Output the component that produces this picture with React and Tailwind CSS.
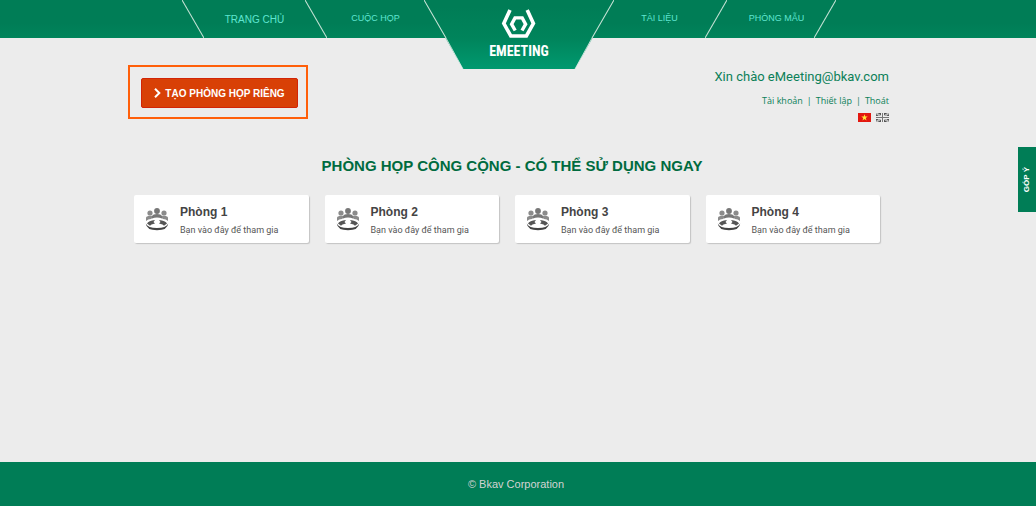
import React from "react";

const rooms = ["Phòng 1", "Phòng 2", "Phòng 3", "Phòng 4"];

function Slash({ mirrored = false }) {
  return (
    <svg viewBox="0 0 22 38" className="h-[38px] w-[22px] shrink-0" aria-hidden="true">
      <path d={mirrored ? "M22 0L0 38" : "M0 0L22 38"} stroke="#c4e2d5" strokeWidth="1.1" fill="none" />
    </svg>
  );
}

function NavLink({ wide = false, children }) {
  return (
    <a
      href="#"
      className={`flex h-[38px] flex-1 items-center justify-center whitespace-nowrap text-[#5fe5d0] ${wide ? "text-[10px]" : "text-[9px]"}`}
    >
      {children}
    </a>
  );
}

function Logo() {
  return (
    <a href="#" aria-label="eMeeting" className="relative -mb-[31px] block h-[69px] w-[190px] shrink-0">
      <svg viewBox="0 0 190 69" className="absolute inset-0 h-full w-full" aria-hidden="true">
        <defs>
          <linearGradient id="badge" x1="0" y1="0" x2="0" y2="1">
            <stop offset="0.1" stopColor="#007d56" />
            <stop offset="0.55" stopColor="#00845b" />
            <stop offset="1" stopColor="#00996f" />
          </linearGradient>
        </defs>
        <path d="M0 0H190L151 69H39Z" fill="url(#badge)" />
        <path d="M0 0L22 38M190 0L168 38" stroke="#c4e2d5" strokeWidth="1.1" />
        <path d="M22 38L39 69M168 38L151 69" stroke="#e3f1ec" strokeWidth="0.8" />
        <g fill="none" stroke="#fff">
          <path d="M86 10L79.800 23.500L86.800 36H102.400L109.400 23.500L103.200 10" strokeWidth="3.600" />
          <path d="M91.200 30.500L87.600 24.200L91 17.900H98.200L101.600 24.200L98 30.500" strokeWidth="3.400" />
        </g>
      </svg>
      <span className="relative flex h-full items-end justify-center pb-2 font-['Roboto_Condensed','Liberation_Sans_Narrow',sans-serif] text-[14px] leading-5 font-bold text-white">
        EMEETING
      </span>
    </a>
  );
}

function MeetingIcon() {
  return (
    <svg viewBox="0 0 24 24" className="size-6 shrink-0" aria-hidden="true">
      <g fill="#8b8b8b">
        <circle cx="5" cy="6" r="2.600" />
        <circle cx="19" cy="6" r="2.600" />
        <path d="M1 14V11Q1 9 5 8.800Q8 8.800 8.500 10L6 12Q3 12 1 14Z" />
        <path d="M23 14V11Q23 9 19 8.800Q16 8.800 15.500 10L18 12Q21 12 23 14Z" />
      </g>
      <g fill="#777">
        <circle cx="12" cy="4" r="2.900" />
        <path d="M7 11.500V9Q8 7.200 12 7Q16 7.200 17 9V11.500Q12 9.500 7 11.500Z" />
      </g>
      <g fill="#555">
        <path d="M2 16.500Q3.500 13.500 10 13L8.500 15L10 16.500L6.500 17.500L5 18.800Z" />
        <path d="M22 16.500Q20.500 13.500 14 13L15.500 15L14 16.500L17.500 17.500L19 18.800Z" />
      </g>
      <path d="M0.800 16.500Q1.500 23.300 12 23.300Q22.500 23.300 23.200 16.500Q21 21 12 21Q3 21 0.800 16.500Z" fill="#444" />
    </svg>
  );
}

function RoomCard({ name }) {
  return (
    <a
      href="#"
      className="flex h-12 flex-1 items-center gap-[11px] rounded-[2px] bg-white pl-[11px] shadow-[1px_1px_1px_#c4c4c4]"
    >
      <MeetingIcon />
      <span className="flex flex-col pt-1 whitespace-nowrap">
        <span className="text-[12px] leading-[18px] font-bold text-[#444]">{name}</span>
        <span className="font-[Roboto,sans-serif] text-[9px] leading-[18px] text-[#555]">
          Bạn vào đây để tham gia
        </span>
      </span>
    </a>
  );
}

function Account() {
  return (
    <div className="flex flex-col items-end pr-px text-[#0b8058]">
      <p className="font-[Roboto,sans-serif] text-[13px] leading-6">Xin chào eMeeting@bkav.com</p>
      <ul className="mt-1 flex font-['Open_Sans',sans-serif] text-[9px] leading-4">
        <li><a href="#">Tài khoản</a></li>
        <li aria-hidden="true" className="px-1">|</li>
        <li><a href="#">Thiết lập</a></li>
        <li aria-hidden="true" className="px-1">|</li>
        <li><a href="#">Thoát</a></li>
      </ul>
      <div className="mt-1 flex gap-[5px]">
        <button type="button" aria-label="Tiếng Việt">
          <svg viewBox="0 0 13 9" className="block h-[9px] w-[13px]">
            <path d="M0 0H13V9H0Z" fill="#e3170f" />
            <path d="M6.500 1.300L7.300 3.600H9.700L7.800 5L8.500 7.400L6.500 6L4.500 7.400L5.200 5L3.300 3.600H5.700Z" fill="#ffe83a" />
          </svg>
        </button>
        <button type="button" aria-label="English">
          <svg viewBox="0 0 13 9" className="block h-[9px] w-[13px]">
            <path d="M0 0H13V9H0Z" fill="#555" />
            <path d="M0 0L13 9M13 0L0 9" stroke="#ddd" strokeWidth="1.800" />
            <path d="M0 0L13 9M13 0L0 9" stroke="#888" strokeWidth="0.600" />
            <path d="M6.500 0V9M0 4.500H13" stroke="#eee" strokeWidth="3" />
            <path d="M6.500 0V9M0 4.500H13" stroke="#777" strokeWidth="1" />
          </svg>
        </button>
      </div>
    </div>
  );
}

export default function App() {
  return (
    <div className="flex min-h-screen flex-col bg-[#ececec] font-['Liberation_Sans',Arial,sans-serif]">
      <header className="h-[38px] bg-linear-to-b from-[#007d56] from-60% to-[#00845b]">
        <nav className="flex items-start justify-center pl-0.5">
          <div className="flex flex-1 justify-end">
            <div className="flex w-[123px]"><Slash /><NavLink wide>TRANG CHỦ</NavLink></div>
            <div className="flex w-[119px]"><Slash /><NavLink>CUỘC HỌP</NavLink></div>
          </div>
          <Logo />
          <div className="flex flex-1">
            <div className="flex w-[113px]"><NavLink>TÀI LIỆU</NavLink><Slash mirrored /></div>
            <div className="flex w-[109px] pl-3"><NavLink>PHÒNG MẪU</NavLink><Slash mirrored /></div>
          </div>
        </nav>
      </header>

      <div className="flex flex-1 items-start">
        <main className="flex-1">
          <div className="mx-auto max-w-[762px] pt-[27px]">
            <div className="flex items-start justify-between">
              <div className="border-2 border-[#ff5f0a] pt-[11px] pr-2 pb-[9px] pl-[11px]">
                <button
                  type="button"
                  className="flex h-[30px] w-[157px] items-center justify-center gap-1 rounded-[2px] border border-[#d22406] bg-[#d84006] text-[10px] font-bold whitespace-nowrap text-white"
                >
                  <svg viewBox="0 0 7 10" className="h-2.5 w-[7px]" aria-hidden="true">
                    <path d="M1 0.800L5.300 5L1 9.200" fill="none" stroke="#fff" strokeWidth="2" />
                  </svg>
                  TẠO PHÒNG HỌP RIÊNG
                </button>
              </div>
              <Account />
            </div>

            <h1 className="mt-8 pl-1.5 text-center text-[15px] leading-6 font-bold text-[#006b3f]">
              PHÒNG HỌP CÔNG CỘNG - CÓ THỂ SỬ DỤNG NGAY
            </h1>

            <section className="mt-[17px] flex gap-4 pr-[10px] pl-1.5">
              {rooms.map((name) => <RoomCard key={name} name={name} />)}
            </section>
          </div>
        </main>
        <button
          type="button"
          aria-label="Góp ý"
          className="mt-[109px] flex h-[65px] w-[18px] items-center justify-center bg-[#007d56] text-white"
        >
          <span className="rotate-180 text-[8px] font-bold whitespace-nowrap [writing-mode:vertical-rl]">GÓP Ý</span>
        </button>
      </div>

      <footer className="flex h-11 items-center justify-center bg-[#007d56] pr-1 text-[11px] text-[#d3d3d3]">
        © Bkav Corporation
      </footer>
    </div>
  );
}
